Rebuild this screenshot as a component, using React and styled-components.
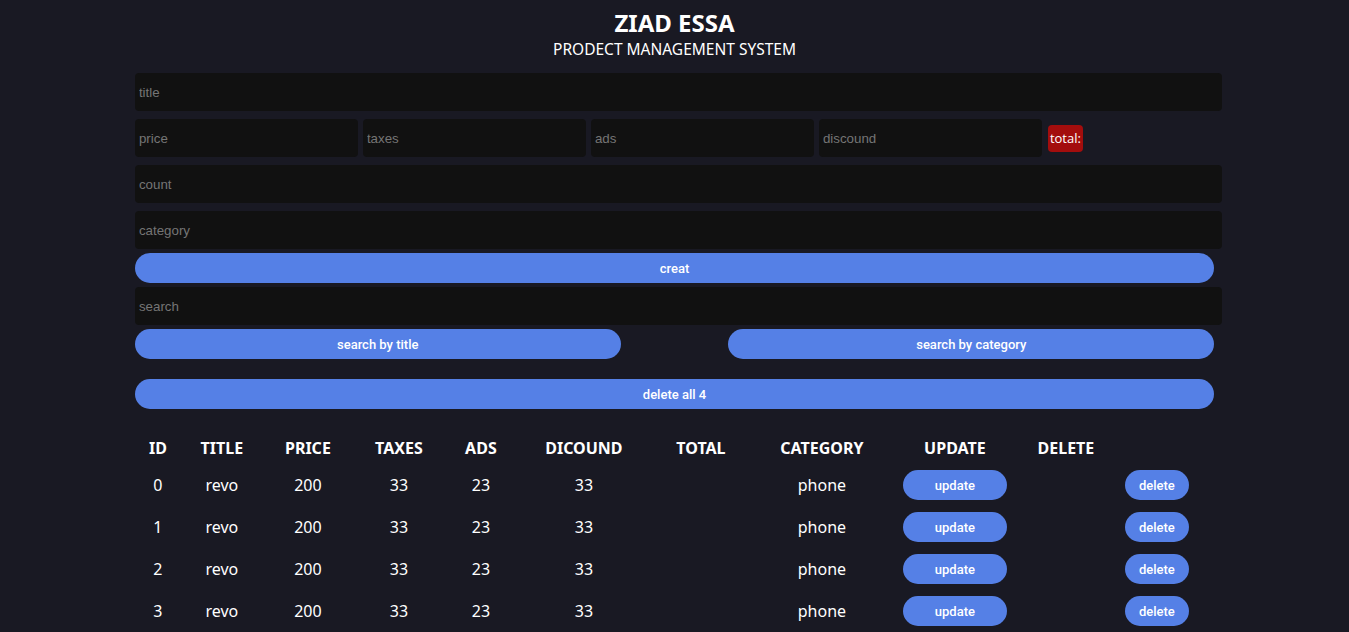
import React from "react";
import styled, { createGlobalStyle } from "styled-components";

const Global = createGlobalStyle`
  html, body { margin: 0; padding: 0; background: #191923; color: #fff; }
  body { font-family: "Noto Sans", "Open Sans", sans-serif; }
  * { box-sizing: border-box; }
`;

const Page = styled.div`
  width: 80%;
  margin: 0 auto;
  padding-top: 8px;
`;

const Head = styled.header`
  text-align: center;
  margin-bottom: 13px;
`;

const Title = styled.h2`
  margin: 0;
  font-size: 24px;
  font-weight: 700;
  line-height: 30px;
`;

const Sub = styled.p`
  margin: 0;
  font-size: 15.5px;
  line-height: 22px;
`;

const Field = styled.input`
  display: block;
  width: calc(100% + 8px);
  height: 38px;
  padding: 0 4px;
  margin: 0 0 ${(p) => p.$mb ?? 8}px;
  background: #111111;
  border: none;
  border-radius: 4px;
  outline: none;
  color: #ddd;
  font-family: "Liberation Sans", Arial, sans-serif;
  font-size: 13.33px;
  &::placeholder { color: #757575; }
`;

const PriceRow = styled.div`
  display: flex;
  align-items: center;
  gap: 5px;
  margin-bottom: 8px;
`;

const SmallField = styled(Field)`
  width: 223px;
  margin: 0;
`;

const Total = styled.small`
  margin-left: 1px;
  height: 27px;
  padding: 0 2px;
  display: flex;
  align-items: center;
  background: #a30d0d;
  border-radius: 4px;
  font-family: "Open Sans", sans-serif;
  font-size: 13px;
  color: #fff;
`;

const Btn = styled.button`
  display: block;
  width: ${(p) => p.$w || "100%"};
  height: 30px;
  border: none;
  border-radius: 15px;
  background: #5580e6;
  color: #fff;
  font-family: Roboto, "Liberation Sans", sans-serif;
  font-weight: 500;
  font-size: 13px;
  cursor: pointer;
  margin: 0 0 ${(p) => p.$mb ?? 4}px;
  padding: 0;
`;

const SearchRow = styled.div`
  display: flex;
  justify-content: space-between;
  margin-bottom: 20px;
`;

const Table = styled.table`
  border-collapse: collapse;
  table-layout: fixed;
  width: 1064px;
  margin-top: 23px;
  text-align: center;
`;

const Th = styled.th`
  font-size: 16px;
  font-weight: 700;
  height: 32px;
  padding: 0;
  text-transform: uppercase;
`;

const Td = styled.td`
  font-size: 16px;
  height: 42px;
  padding: 0;
`;

const RowBtn = styled(Btn)`
  display: inline-block;
  width: ${(p) => p.$w};
  margin: 0;
  font-size: 13px;
`;

const widths = [46, 82, 90, 92, 72, 134, 100, 142, 124, 98, 84];
const heads = ["id", "title", "price", "taxes", "ads", "dicound", "total", "category", "update", "delete"];
const rows = [0, 1, 2, 3];

export default function App() {
  return (
    <>
      <Global />
      <Page>
        <Head>
          <Title>ZIAD ESSA</Title>
          <Sub>PRODECT MANAGEMENT SYSTEM</Sub>
        </Head>
        <Field placeholder="title" />
        <PriceRow>
          <SmallField placeholder="price" />
          <SmallField placeholder="taxes" />
          <SmallField placeholder="ads" />
          <SmallField placeholder="discound" />
          <Total>total:</Total>
        </PriceRow>
        <Field placeholder="count" />
        <Field placeholder="category" $mb={4} />
        <Btn $mb={4}>creat</Btn>
        <Field placeholder="search" $mb={4} />
        <SearchRow>
          <Btn $w="45%" $mb={0}>search by title</Btn>
          <Btn $w="45%" $mb={0}>search by category</Btn>
        </SearchRow>
        <Btn $mb={0}>delete all 4</Btn>
        <Table>
          <colgroup>
            {widths.map((w, i) => (
              <col key={i} style={{ width: w }} />
            ))}
          </colgroup>
          <thead>
            <tr>
              {heads.map((h) => (
                <Th key={h}>{h}</Th>
              ))}
            </tr>
          </thead>
          <tbody>
            {rows.map((r) => (
              <tr key={r}>
                <Td>{r}</Td>
                <Td>revo</Td>
                <Td>200</Td>
                <Td>33</Td>
                <Td>23</Td>
                <Td>33</Td>
                <Td></Td>
                <Td>phone</Td>
                <Td><RowBtn $w="104px">update</RowBtn></Td>
                <Td></Td>
                <Td><RowBtn $w="64px">delete</RowBtn></Td>
              </tr>
            ))}
          </tbody>
        </Table>
      </Page>
    </>
  );
}
